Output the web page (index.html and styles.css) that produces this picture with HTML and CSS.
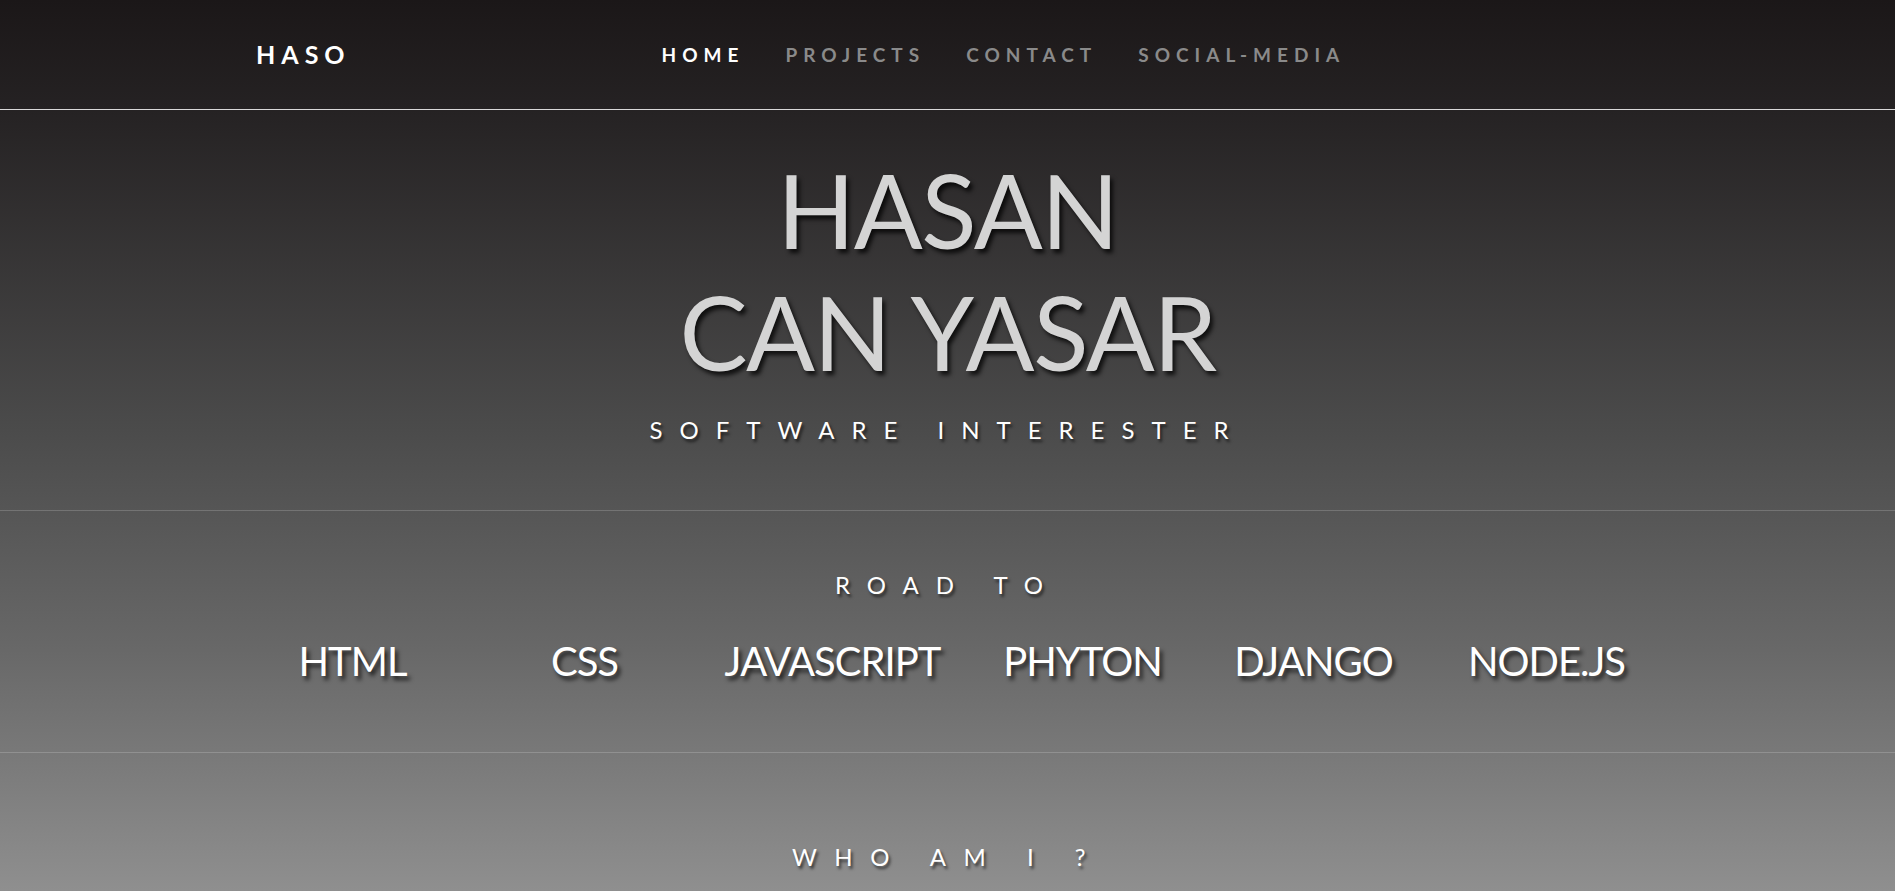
FILE: index.html
```html
<!DOCTYPE html>
<html lang="en">
<head>
<meta charset="utf-8">
<title>HASO</title>
<link rel="stylesheet" href="styles.css">
</head>
<body>
<header class="topbar">
  <a class="logo" href="#">HASO</a>
  <nav class="menu">
    <a class="menu-link active" href="#">HOME</a>
    <a class="menu-link" href="#">PROJECTS</a>
    <a class="menu-link" href="#">CONTACT</a>
    <a class="menu-link" href="#">SOCIAL-MEDIA</a>
  </nav>
</header>
<main>
  <section class="hero">
    <h1 class="hero-title">HASAN<br>CAN YASAR</h1>
    <p class="spaced">SOFTWARE INTERESTER</p>
  </section>
  <section class="road">
    <h2 class="spaced">ROAD TO</h2>
    <ul class="skills">
      <li>HTML</li>
      <li>CSS</li>
      <li>JAVASCRIPT</li>
      <li>PHYTON</li>
      <li>DJANGO</li>
      <li>NODE.JS</li>
    </ul>
  </section>
  <section class="about">
    <h2 class="spaced">WHO AM I ?</h2>
  </section>
</main>
</body>
</html>
```
FILE: styles.css
```css
html, body {
  margin: 0;
  padding: 0;
}
body {
  height: 891px;
  overflow: hidden;
  font-family: "Lato", "Noto Sans", sans-serif;
  background: linear-gradient(180deg, #1b1718 0px, #252223 110px, #4b4b4b 430px, #686868 650px, #8f8f8f 891px);
  color: #fff;
}
.topbar {
  height: 110px;
  box-sizing: border-box;
  border-bottom: 1px solid #d9d9d9;
  display: flex;
  align-items: center;
  padding-left: 256px;
  padding-bottom: 1px;
}
.logo {
  color: #fff;
  text-decoration: none;
  font-size: 25px;
  font-weight: 700;
  letter-spacing: 6px;
}
.menu {
  display: flex;
  gap: 41px;
  margin-left: 311px;
}
.menu-link {
  color: #8a8a8a;
  text-decoration: none;
  font-size: 19px;
  font-weight: 700;
  letter-spacing: 6px;
}
.menu-link.active {
  color: #fff;
}
.hero {
  text-align: center;
  padding: 39px 0 65px;
  border-bottom: 1px solid rgba(255, 255, 255, 0.18);
}
.hero-title {
  margin: 0;
  font-size: 102px;
  line-height: 122px;
  font-weight: 400;
  letter-spacing: -1.5px;
  color: #d4d4d4;
  text-shadow: 3px 4px 4px rgba(0, 0, 0, 0.75);
}
.spaced {
  margin: 0;
  font-size: 24px;
  line-height: 30px;
  font-weight: 400;
  letter-spacing: 17px;
  color: #fff;
  text-shadow: 2px 3px 3px rgba(0, 0, 0, 0.6);
}
.hero .spaced {
  margin-top: 22px;
}
.about .spaced {
  letter-spacing: 17.5px;
}
.road {
  text-align: center;
  padding: 59px 0 66px;
  border-bottom: 1px solid rgba(255, 255, 255, 0.18);
}
.skills {
  list-style: none;
  margin: 36px 0 0;
  padding: 0;
  display: grid;
  grid-template-columns: 240px 224px 272px 228px 234px 232px;
  justify-content: center;
}
.skills li {
  font-size: 40px;
  line-height: 50px;
  letter-spacing: -1px;
  color: #fff;
  text-shadow: 3px 4px 4px rgba(0, 0, 0, 0.7);
}
.about {
  text-align: center;
  padding-top: 89px;
}
```
